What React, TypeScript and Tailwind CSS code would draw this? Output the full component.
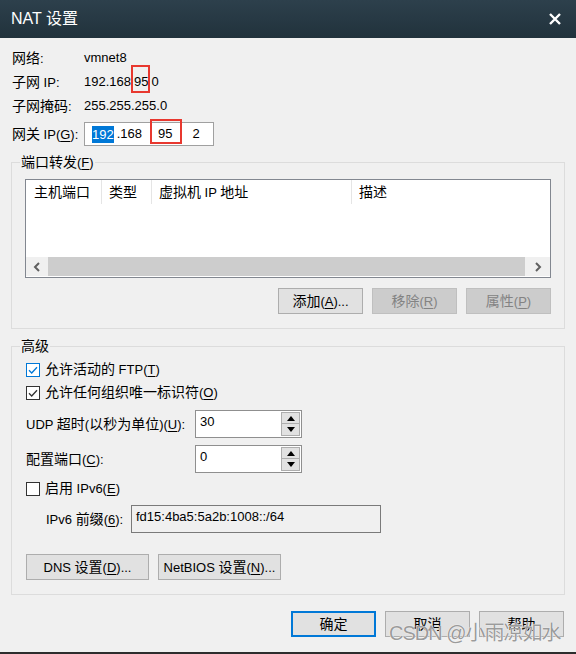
import React from "react";

// CJK runs are set a little larger than latin text, as in the original dialog
function T({ s }: { s: string }) {
  const parts = s.split(/([\u3000-\u9fff\uff00-\uffef]+)/);
  return (
    <span className="whitespace-pre">
      {parts.map((p, i) =>
        i % 2 ? (
          <span key={i} className="text-[14px]">
            {p}
          </span>
        ) : (
          p
        )
      )}
    </span>
  );
}

// "&X" marks the access key, drawn underlined
function Label({ s }: { s: string }) {
  const i = s.indexOf("&");
  if (i < 0) return <T s={s} />;
  return (
    <span>
      <T s={s.slice(0, i)} />
      <u className="underline-offset-2">{s[i + 1]}</u>
      <T s={s.slice(i + 2)} />
    </span>
  );
}

function Btn({ s, disabled, primary, w = "w-[85px]" }: { s: string; disabled?: boolean; primary?: boolean; w?: string }) {
  let cls = "border border-[#adadad] bg-[#e1e1e1] text-black";
  if (disabled) cls = "border border-[#bfbfbf] bg-[#cccccc] text-[#838383]";
  if (primary) cls = "border-2 border-[#0078d7] bg-[#e1e1e1] text-black";
  return (
    <div className={`${w} h-[26px] flex items-center justify-center ${cls}`}>
      <Label s={s} />
    </div>
  );
}

function Check({ checked, focus }: { checked?: boolean; focus?: boolean }) {
  const color = focus ? "#0078d7" : "#333333";
  return (
    <div className={`w-[14px] h-[14px] bg-white border ${focus ? "border-[#0078d7]" : "border-[#333333]"}`}>
      {checked && (
        <svg width="12" height="12" viewBox="0 0 12 12">
          <path d="M2 6.3 L4.7 9 L10 3.2" fill="none" stroke={color} strokeWidth="1.3" />
        </svg>
      )}
    </div>
  );
}

function Spin({ value }: { value: string }) {
  return (
    <div className="w-[107px] h-[28px] border border-[#8f8f8f] bg-white flex">
      <div className="flex-1 pl-[4px] pt-[3px] leading-[16px]">{value}</div>
      <div className="w-[19px] mr-[1px] mt-[1px] flex flex-col">
        <div className="h-[12px] border border-[#adadad] bg-[#e1e1e1] flex items-center justify-center">
          <svg width="8" height="5" viewBox="0 0 8 5">
            <path d="M0 5 L4 0 L8 5 Z" fill="#000" />
          </svg>
        </div>
        <div className="h-[12px] border border-[#adadad] border-t-0 bg-[#e1e1e1] flex items-center justify-center">
          <svg width="8" height="5" viewBox="0 0 8 5">
            <path d="M0 0 L4 5 L8 0 Z" fill="#000" />
          </svg>
        </div>
      </div>
    </div>
  );
}

function Chevron({ right }: { right?: boolean }) {
  return (
    <svg width="8" height="10" viewBox="0 0 8 10">
      <path d={right ? "M2 1 L6 5 L2 9" : "M6 1 L2 5 L6 9"} fill="none" stroke="#606060" strokeWidth="2" />
    </svg>
  );
}

export default function App() {
  return (
    <div className="relative w-[576px] h-[654px] flex flex-col overflow-hidden bg-[#f0f0f0] border-b-2 border-[#2d2d2d] text-[13px] text-black font-['Liberation_Sans','Noto_Sans_CJK_SC',sans-serif]">
      {/* Title bar */}
      <div className="h-[38px] shrink-0 flex items-center justify-between pl-[11px] pr-[14px] bg-gradient-to-b from-[#2d404c] to-[#21323c] text-white">
        <span className="text-[16px]">NAT 设置</span>
        <svg width="14" height="14" viewBox="0 0 14 14">
          <path d="M2 2 L12 12 M12 2 L2 12" stroke="#ffffff" strokeWidth="2.4" />
        </svg>
      </div>

      <div className="flex-1 px-[11px] pt-[8px]">
        {/* Network info */}
        <div className="pl-[1px]">
          <div className="flex h-[24px] items-center">
            <div className="w-[72px]"><Label s="网络:" /></div>
            <div>vmnet8</div>
          </div>
          <div className="flex h-[24px] items-center">
            <div className="w-[72px]"><Label s="子网 IP:" /></div>
            <div>
              192.168
              <span className="relative inline-block leading-[24px] ml-[3px]">
                95
                <span className="absolute -left-[3px] -right-[2px] -top-[5px] bottom-[1px] border-2 border-[#e8382f]" />
              </span>
              <span className="ml-[3px]">0</span>
            </div>
          </div>
          <div className="flex h-[24px] items-center">
            <div className="w-[72px]"><Label s="子网掩码:" /></div>
            <div>255.255.255.0</div>
          </div>
          <div className="flex h-[24px] items-center mt-[4px]">
            <div className="w-[72px]"><Label s="网关 IP(&G):" /></div>
            <div className="w-[130px] h-[24px] border border-[#a0a0a0] bg-white flex items-center pl-[7px]">
              <span className="bg-[#0078d7] text-white leading-[17px]">192</span>
              <span className="ml-[3px]">.168</span>
              <span className="relative inline-block leading-[18px] ml-[16px]">
                95
                <span className="absolute -left-[8px] -right-[10px] -top-[6px] -bottom-[1px] border-2 border-[#e8382f]" />
              </span>
              <span className="ml-[20px]">2</span>
            </div>
          </div>
        </div>

        {/* Port forwarding */}
        <fieldset className="mt-[8px] border border-[#dcdcdc] px-[13px] pb-[14px]">
          <legend className="-ml-[5px] px-[1px] leading-[16px]"><Label s="端口转发(&F)" /></legend>
          <div className="mt-[8px] h-[99px] border border-[#828790] bg-white flex flex-col">
            <div className="flex h-[24px]">
              <div className="w-[76px] pl-[8px] flex items-center border-r border-[#e5e5e5]"><T s="主机端口" /></div>
              <div className="w-[50px] pl-[7px] flex items-center border-r border-[#e5e5e5]"><T s="类型" /></div>
              <div className="w-[200px] pl-[7px] flex items-center border-r border-[#e5e5e5]"><T s="虚拟机 IP 地址" /></div>
              <div className="flex-1 pl-[7px] flex items-center"><T s="描述" /></div>
            </div>
            <div className="flex-1" />
            <div className="h-[19px] mb-px flex">
              <div className="w-[22px] bg-[#f0f0f0] flex items-center justify-center"><Chevron /></div>
              <div className="flex-1 bg-[#cdcdcd]" />
              <div className="w-[25px] bg-[#f0f0f0] flex items-center justify-center"><Chevron right /></div>
            </div>
          </div>
          <div className="mt-[10px] flex justify-end gap-[9px]">
            <Btn s="添加(&A)..." />
            <Btn s="移除(&R)" disabled />
            <Btn s="属性(&P)" disabled />
          </div>
        </fieldset>

        {/* Advanced */}
        <fieldset className="mt-[9px] border border-[#dcdcdc] px-[14px] pb-[14px]">
          <legend className="-ml-[6px] px-[1px] leading-[16px]"><Label s="高级" /></legend>
          <div className="mt-[3px] h-[23px] flex items-center gap-[5px]">
            <Check checked focus />
            <Label s="允许活动的 FTP(&T)" />
          </div>
          <div className="h-[23px] flex items-center gap-[5px]">
            <Check checked />
            <Label s="允许任何组织唯一标识符(&O)" />
          </div>
          <div className="mt-[6px] h-[28px] flex items-center">
            <div className="w-[169px]"><Label s="UDP 超时(以秒为单位)(&U):" /></div>
            <Spin value="30" />
          </div>
          <div className="mt-[7px] h-[28px] flex items-center">
            <div className="w-[169px]"><Label s="配置端口(&C):" /></div>
            <Spin value="0" />
          </div>
          <div className="mt-[4px] h-[23px] flex items-center gap-[5px]">
            <Check />
            <Label s="启用 IPv6(&E)" />
          </div>
          <div className="mt-[5px] h-[28px] flex items-center pl-[20px]">
            <div className="w-[85px]"><Label s="IPv6 前缀(&6):" /></div>
            <div className="w-[250px] h-[28px] border border-[#7a7a7a] bg-[#f0f0f0] pl-[4px] pt-[3px] leading-[16px]">
              fd15:4ba5:5a2b:1008::/64
            </div>
          </div>
          <div className="mt-[21px] flex gap-[9px]">
            <Btn s="DNS 设置(&D)..." w="w-[123px]" />
            <Btn s="NetBIOS 设置(&N)..." w="w-[123px]" />
          </div>
        </fieldset>

        {/* Dialog buttons */}
        <div className="mt-[16px] pr-[1px] flex justify-end gap-[9px]">
          <Btn s="确定" primary />
          <Btn s="取消" />
          <Btn s="帮助" />
        </div>
      </div>

      {/* Watermark */}
      <div className="absolute left-[389px] top-[618px] text-[20px] tracking-[-1px] text-[#9b9b9b] [text-shadow:0_0_1px_#ffffff,0_0_1px_#ffffff] whitespace-nowrap">
        CSDN @小雨凉如水
      </div>
    </div>
  );
}
